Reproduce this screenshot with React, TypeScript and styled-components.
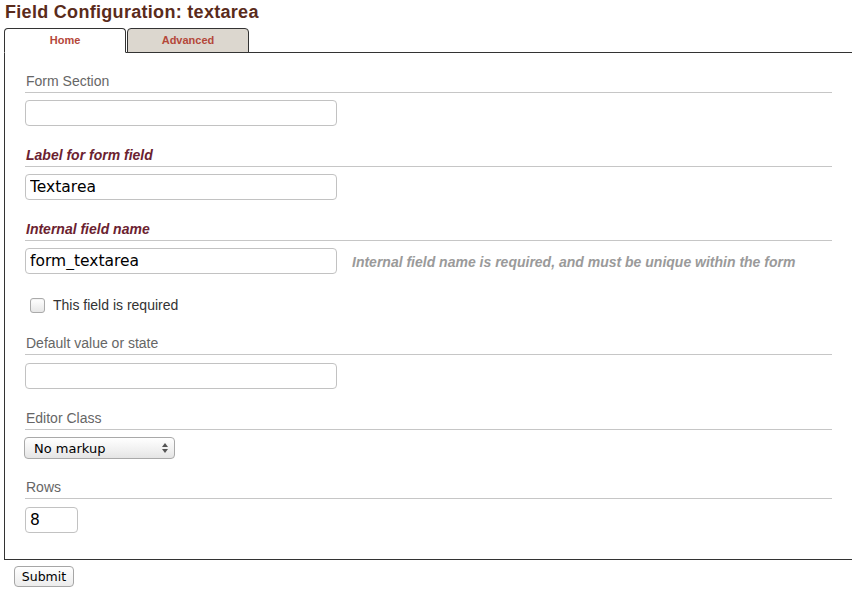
import React from "react";
import styled, { createGlobalStyle } from "styled-components";

const Global = createGlobalStyle`
  html, body { margin: 0; padding: 0; background: #fff; overflow: hidden; }
  body { font-family: "Liberation Sans", Arial, sans-serif; }
`;

const Page = styled.div`
  width: 852px;
  height: 593px;
  padding: 0 0 0 4px;
  box-sizing: border-box;
  overflow: hidden;
`;

const Title = styled.h1`
  margin: 0;
  padding-top: 2px;
  font-size: 18px;
  line-height: 21px;
  letter-spacing: 0.3px;
  font-weight: bold;
  color: #5a2b1b;
  padding-left: 1px;
`;

const TabBar = styled.div`
  display: flex;
  gap: 1px;
  margin-top: 5px;
  margin-bottom: -1px;
  position: relative;
  z-index: 1;
`;

const Tab = styled.div<{ $active?: boolean }>`
  width: 122px;
  height: 25px;
  border: 1px solid #333;
  border-bottom-color: ${(p) => (p.$active ? "#fff" : "#333")};
  border-radius: 4px 4px 0 0;
  background: ${(p) => (p.$active ? "#fff" : "#dcd7cf")};
  color: #b4473a;
  font-size: 11px;
  font-weight: bold;
  display: flex;
  justify-content: center;
  padding-top: 5px;
  box-sizing: border-box;
`;

const Panel = styled.div`
  border: 1px solid #333;
  margin-right: -1px;
  padding: 19px 20px 26px 20px;
  display: flex;
  flex-direction: column;
`;

const Section = styled.div<{ $gap?: number }>`
  display: flex;
  flex-direction: column;
  margin-top: ${(p) => p.$gap ?? 20}px;
  &:first-child { margin-top: 0; }
`;

const Heading = styled.div<{ $required?: boolean; $space?: number }>`
  font-size: 14px;
  font-weight: ${(p) => (p.$required ? "bold" : "normal")};
  font-style: ${(p) => (p.$required ? "italic" : "normal")};
  color: ${(p) => (p.$required ? "#6b2230" : "#666")};
  line-height: 17px;
  height: 17px;
  padding: 1px 0 2px 1px;
  border-bottom: 1px solid #c6c6c6;
  margin-bottom: ${(p) => p.$space ?? 7}px;
`;

const FieldRow = styled.div`
  display: flex;
  align-items: center;
  gap: 15px;
`;

const TextInput = styled.input<{ $w?: number }>`
  width: ${(p) => p.$w ?? 312}px;
  height: 26px;
  box-sizing: border-box;
  border: 1px solid #c2c2c2;
  border-radius: 4px;
  padding: 0 4px;
  font-family: "DejaVu Sans", sans-serif;
  font-size: 15.5px;
  color: #000;
  outline: none;
  background: #fff;
`;

const Hint = styled.span`
  font-size: 14px;
  font-weight: bold;
  font-style: italic;
  color: #9a9a9a;
  padding-top: 2px;
`;

const CheckRow = styled.label`
  display: flex;
  align-items: center;
  gap: 8px;
  margin: 21px 0 0 5px;
  height: 20px;
  font-size: 14px;
  color: #333;
`;

const Check = styled.span`
  width: 13px;
  height: 13px;
  border: 1px solid #aaa;
  border-radius: 3px;
  background: linear-gradient(#fff, #e6e6e6);
  box-shadow: inset 0 1px 1px rgba(0,0,0,0.05);
`;

const SelectWrap = styled.div`
  position: relative;
  width: 151px;
  height: 22px;
  margin-left: -1px;
`;

const Select = styled.select`
  appearance: none;
  -webkit-appearance: none;
  width: 100%;
  height: 100%;
  border: 1px solid #a9a9a9;
  border-radius: 4px;
  background: linear-gradient(#ffffff, #f0f0f0 60%, #e4e4e4);
  font-family: "DejaVu Sans", sans-serif;
  font-size: 13px;
  color: #000;
  padding: 0 0 0 9px;
  outline: none;
`;

const Arrows = styled.svg`
  position: absolute;
  right: 7px;
  top: 6px;
  pointer-events: none;
`;

const Submit = styled.button`
  margin: 6px 0 0 10px;
  width: 60px;
  height: 21px;
  border: 1px solid #a6a6a6;
  border-radius: 4px;
  background: linear-gradient(#ffffff, #ececec);
  font-family: "DejaVu Sans", sans-serif;
  font-size: 12.5px;
  color: #000;
  padding: 0;
`;

export default function App() {
  return (
    <Page>
      <Global />
      <Title>Field Configuration: textarea</Title>
      <TabBar>
        <Tab $active>Home</Tab>
        <Tab>Advanced</Tab>
      </TabBar>
      <Panel>
        <Section>
          <Heading>Form Section</Heading>
          <TextInput defaultValue="" />
        </Section>
        <Section>
          <Heading $required>Label for form field</Heading>
          <TextInput defaultValue="Textarea" />
        </Section>
        <Section>
          <Heading $required>Internal field name</Heading>
          <FieldRow>
            <TextInput defaultValue="form_textarea" />
            <Hint>Internal field name is required, and must be unique within the form</Hint>
          </FieldRow>
        </Section>
        <CheckRow>
          <Check />
          This field is required
        </CheckRow>
        <Section $gap={19}>
          <Heading $space={8}>Default value or state</Heading>
          <TextInput defaultValue="" />
        </Section>
        <Section>
          <Heading>Editor Class</Heading>
          <SelectWrap>
            <Select defaultValue="none">
              <option value="none">No markup</option>
            </Select>
            <Arrows width="6" height="10" viewBox="0 0 6 10">
              <path d="M3 0 L6 4 L0 4 Z" fill="#555" />
              <path d="M3 10 L6 6 L0 6 Z" fill="#555" />
            </Arrows>
          </SelectWrap>
        </Section>
        <Section $gap={19}>
          <Heading $space={8}>Rows</Heading>
          <TextInput $w={53} defaultValue="8" />
        </Section>
      </Panel>
      <Submit>Submit</Submit>
    </Page>
  );
}
